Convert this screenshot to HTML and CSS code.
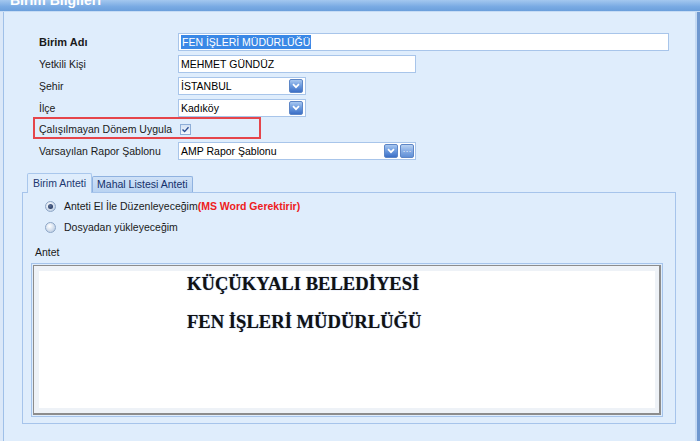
FILE: index.html
```html
<!DOCTYPE html>
<html>
<head>
<meta charset="utf-8">
<link rel="stylesheet" href="styles.css">
</head>
<body>
<div class="window">
  <div class="titlebar"><span class="title">Birim Bilgileri</span></div>
  <div class="frame">
    <div class="panel">
      <div class="form">
        <div class="row r1">
          <label class="lbl bold">Birim Adı</label>
          <div class="input wide"><span class="sel">FEN İŞLERİ MÜDÜRLÜĞÜ</span></div>
        </div>
        <div class="row r2">
          <label class="lbl">Yetkili Kişi</label>
          <div class="input mid">MEHMET GÜNDÜZ</div>
        </div>
        <div class="row r3">
          <label class="lbl">Şehir</label>
          <div class="input combo small"><span class="val">İSTANBUL</span><span class="btn"><svg width="8" height="6" viewBox="0 0 8 6"><path d="M1 1.2 L4 4.2 L7 1.2" fill="none" stroke="#fff" stroke-width="1.7"/></svg></span></div>
        </div>
        <div class="row r4">
          <label class="lbl">İlçe</label>
          <div class="input combo small"><span class="val">Kadıköy</span><span class="btn"><svg width="8" height="6" viewBox="0 0 8 6"><path d="M1 1.2 L4 4.2 L7 1.2" fill="none" stroke="#fff" stroke-width="1.7"/></svg></span></div>
        </div>
        <div class="row r5">
          <label class="lbl">Çalışılmayan Dönem Uygula</label>
          <span class="check"><svg width="9" height="9" viewBox="0 0 9 9"><path d="M1.5 4.5 L3.6 6.6 L7.5 2.2" fill="none" stroke="#2b4d92" stroke-width="1.4"/></svg></span>
          <div class="highlight"></div>
        </div>
        <div class="row r6">
          <label class="lbl">Varsayılan Rapor Şablonu</label>
          <div class="input combo rapor"><span class="val">AMP Rapor Şablonu</span><span class="btn"><svg width="8" height="6" viewBox="0 0 8 6"><path d="M1 1.2 L4 4.2 L7 1.2" fill="none" stroke="#fff" stroke-width="1.7"/></svg></span><span class="btn dots">···</span></div>
        </div>
      </div>

      <div class="tabs">
        <div class="tabstrip">
          <div class="tab active">Birim Anteti</div>
          <div class="tab">Mahal Listesi Anteti</div>
        </div>
        <div class="tabpanel">
          <div class="radio-row">
            <span class="radio on"></span>
            <span class="rtext">Anteti El İle Düzenleyeceğim</span><span class="warn">(MS Word Gerektirir)</span>
          </div>
          <div class="radio-row">
            <span class="radio"></span>
            <span class="rtext">Dosyadan yükleyeceğim</span>
          </div>
          <div class="antet-label">Antet</div>
          <div class="antet-box">
            <div class="antet-inner">
              <div class="doc">
                <p class="line">KÜÇÜKYALI BELEDİYESİ</p>
                <p class="line">FEN İŞLERİ MÜDÜRLÜĞÜ</p>
              </div>
            </div>
          </div>
        </div>
      </div>
    </div>
  </div>
</div>
</body>
</html>
```
FILE: styles.css
```css
html, body {
  margin: 0;
  padding: 0;
}
body {
  width: 700px;
  height: 441px;
  overflow: hidden;
  background: #dfedfc;
  font-family: "Liberation Sans", Arial, sans-serif;
  font-size: 10.5px;
  color: #1a1a1a;
}
.window {
  width: 700px;
  height: 441px;
  display: flex;
  flex-direction: column;
  background: #dde9f8;
}
.titlebar {
  height: 11px;
  flex: none;
  overflow: hidden;
  background: linear-gradient(#a4c8ef, #79aae3 60%, #6b9fdc);
  border-bottom: 1px solid #c6dcf5;
  padding-left: 10px;
}
.title {
  display: block;
  margin-top: -10px;
  line-height: 20px;
  font-size: 14px;
  font-weight: bold;
  color: #ffffff;
  font-family: "Liberation Sans", Arial, sans-serif;
  white-space: nowrap;
}
.frame {
  flex: 1;
  display: flex;
  padding-left: 3px;
  border-right: 3px solid #6f98cf;
  background: #dbe8f8;
}
.panel {
  flex: 1;
  background: #dfedfc;
  border-left: 1px solid #9fc0e8;
  border-right: 2px solid #c5daf3;
  display: flex;
  flex-direction: column;
}
.form {
  padding-top: 21px;
  padding-left: 35px;
  display: flex;
  flex-direction: column;
}
.row {
  display: flex;
  align-items: center;
  height: 18px;
  position: relative;
}
.r2, .r3, .r4 { margin-top: 4px; }
.r5 { margin-top: 3px; }
.r6 { margin-top: 4px; }
.lbl {
  width: 139px;
  flex: none;
  line-height: 14px;
  white-space: nowrap;
}
.bold { font-weight: bold; font-size: 11px; }
.input {
  box-sizing: border-box;
  height: 18px;
  border: 1px solid #a8c5ea;
  background: #fff;
  display: flex;
  align-items: center;
  padding-left: 2px;
  line-height: 14px;
  color: #000;
  white-space: nowrap;
}
.wide { width: 491px; }
.mid { width: 238px; }
.small { width: 128px; }
.rapor { width: 238px; }
.sel {
  background: #3a88e6;
  color: #fff;
  padding: 0 1px;
  line-height: 14px;
}
.combo { padding-right: 1px; }
.combo .val { flex: 1; }
.btn {
  width: 14px;
  height: 14px;
  box-sizing: border-box;
  border: 1px solid #5d86c6;
  border-radius: 2px;
  background: linear-gradient(#a9c8f0, #6f9de0 45%, #3c6fc6);
  display: flex;
  align-items: center;
  justify-content: center;
  margin-right: 1px;
}
.btn.dots {
  color: #e8f0fb;
  font-size: 9px;
  line-height: 10px;
  margin-right: 0;
  margin-left: 1px;
  background: linear-gradient(#b9d2f2, #8bb0e6 45%, #5f8fd6);
}
.check {
  width: 11px;
  height: 11px;
  box-sizing: border-box;
  border: 1px solid #8eaed8;
  background: linear-gradient(#d4e2f4, #f4f8fd);
  margin-left: 2px;
  display: flex;
  align-items: center;
  justify-content: center;
}
.highlight {
  position: absolute;
  left: -6px;
  top: -3px;
  width: 228px;
  height: 22px;
  box-sizing: border-box;
  border: 2px solid #e5454b;
  pointer-events: none;
}
.tabs {
  margin-top: 13px;
  margin-left: 18px;
  width: 654px;
  display: flex;
  flex-direction: column;
}
.tabstrip {
  display: flex;
  align-items: flex-end;
  padding-left: 5px;
  height: 19px;
  position: relative;
  z-index: 1;
}
.tab {
  height: 16px;
  box-sizing: border-box;
  padding: 0 4px;
  line-height: 15px;
  border: 1px solid #8fb2e0;
  border-bottom: none;
  background: linear-gradient(#cfe1f7, #b9d3f2);
  color: #15306b;
  border-radius: 2px 2px 0 0;
  white-space: nowrap;
}
.tab.active {
  line-height: 18px;
  padding: 0 5px;
  background: #dfedfc;
  border-color: #a9c7ec;
  color: #1d3870;
  margin-bottom: -1px;
  height: 20px;
}
.tabpanel {
  height: 232px;
  box-sizing: border-box;
  border: 1px solid #a6c4eb;
  background: #dfedfc;
  padding-top: 5px;
  padding-left: 22px;
}
.radio-row {
  display: flex;
  align-items: center;
  height: 16px;
  margin-bottom: 5px;
  white-space: nowrap;
}
.radio {
  width: 11px;
  height: 11px;
  border-radius: 50%;
  box-sizing: border-box;
  border: 1px solid #8ea7c7;
  background: radial-gradient(circle at 40% 35%, #ffffff, #c6d5e8 70%, #aebfd6);
  margin-right: 8px;
  display: flex;
  align-items: center;
  justify-content: center;
}
.radio.on::after {
  content: "";
  width: 5px;
  height: 5px;
  border-radius: 50%;
  background: radial-gradient(circle at 40% 35%, #5a6f96, #1b2c52);
}
.rtext { color: #1a1a1a; }
.warn {
  color: #ee2020;
  font-weight: bold;
}
.antet-label {
  margin-top: 10px;
  margin-left: -10px;
  line-height: 14px;
}
.antet-box {
  margin-top: 4px;
  margin-left: -14px;
  width: 632px;
  height: 154px;
  box-sizing: border-box;
  border: 1px solid #a6c4eb;
  padding: 1px;
}
.antet-inner {
  height: 100%;
  box-sizing: border-box;
  border: 1px solid #8c8c8c;
  border-bottom-width: 2px;
  border-right-width: 2px;
  background: #eef2f7;
  padding: 5px 4px 5px 5px;
}
.doc {
  height: 100%;
  background: #fff;
  padding-left: 148px;
  padding-top: 2px;
  box-sizing: border-box;
}
.line {
  margin: 0;
  font-family: "Liberation Serif", "Times New Roman", serif;
  font-weight: bold;
  font-size: 18.6px;
  line-height: 22px;
  color: #111;
  text-shadow: 0 0 1px #6f8fcf;
  white-space: nowrap;
}
.line + .line { margin-top: 16px; }
```
